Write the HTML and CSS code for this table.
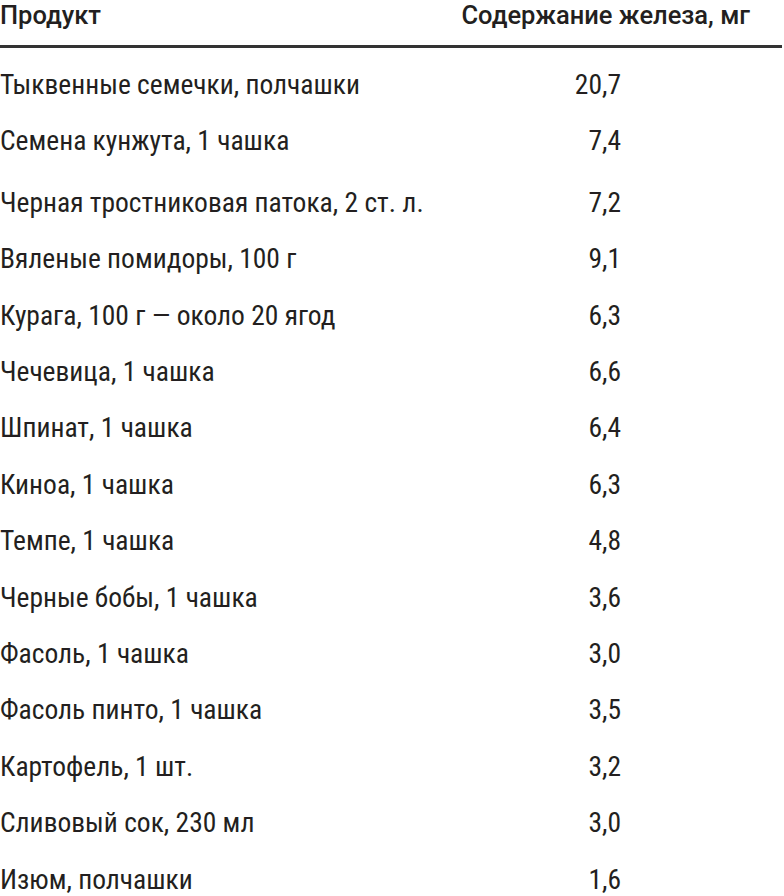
FILE: index.html
```html
<!DOCTYPE html>
<html lang="ru">
<head>
<meta charset="utf-8">
<title>Содержание железа</title>
<link rel="stylesheet" href="styles.css">
</head>
<body>
<div class="iron-table">
  <div class="head">
    <div class="head-product">Продукт</div>
    <div class="head-value">Содержание железа, мг</div>
  </div>
  <div class="rows">
    <div class="row"><div class="name">Тыквенные семечки, полчашки</div><div class="value">20,7</div></div>
    <div class="row"><div class="name">Семена кунжута, 1 чашка</div><div class="value">7,4</div></div>
    <div class="row row-gap"><div class="name">Черная тростниковая патока, 2 ст. л.</div><div class="value">7,2</div></div>
    <div class="row"><div class="name">Вяленые помидоры, 100 г</div><div class="value">9,1</div></div>
    <div class="row"><div class="name">Курага, 100 г — около 20 ягод</div><div class="value">6,3</div></div>
    <div class="row"><div class="name">Чечевица, 1 чашка</div><div class="value">6,6</div></div>
    <div class="row"><div class="name">Шпинат, 1 чашка</div><div class="value">6,4</div></div>
    <div class="row"><div class="name">Киноа, 1 чашка</div><div class="value">6,3</div></div>
    <div class="row"><div class="name">Темпе, 1 чашка</div><div class="value">4,8</div></div>
    <div class="row"><div class="name">Черные бобы, 1 чашка</div><div class="value">3,6</div></div>
    <div class="row"><div class="name">Фасоль, 1 чашка</div><div class="value">3,0</div></div>
    <div class="row"><div class="name">Фасоль пинто, 1 чашка</div><div class="value">3,5</div></div>
    <div class="row"><div class="name">Картофель, 1 шт.</div><div class="value">3,2</div></div>
    <div class="row"><div class="name">Сливовый сок, 230 мл</div><div class="value">3,0</div></div>
    <div class="row"><div class="name">Изюм, полчашки</div><div class="value">1,6</div></div>
  </div>
</div>
</body>
</html>
```
FILE: styles.css
```css
html, body {
  margin: 0;
  padding: 0;
  background: #ffffff;
}

body {
  font-family: Roboto, "Liberation Sans", sans-serif;
  color: #231f20;
  overflow: hidden;
}

.iron-table {
  width: 782px;
}

.head {
  display: flex;
  justify-content: space-between;
  align-items: baseline;
  font-size: 25.5px;
  font-weight: 500;
  line-height: 30px;
  padding: 0 32px 15px 0;
  border-bottom: 3px solid #333333;
  white-space: nowrap;
}

.rows {
  padding-top: 9px;
  font-stretch: 85%;
}

.row {
  display: grid;
  grid-template-columns: 1fr auto;
  padding-right: 161px;
  font-size: 27.5px;
  line-height: 56.4px;
  white-space: nowrap;
}

.row-gap {
  margin-top: 5px;
}

.value {
  text-align: right;
}
```
